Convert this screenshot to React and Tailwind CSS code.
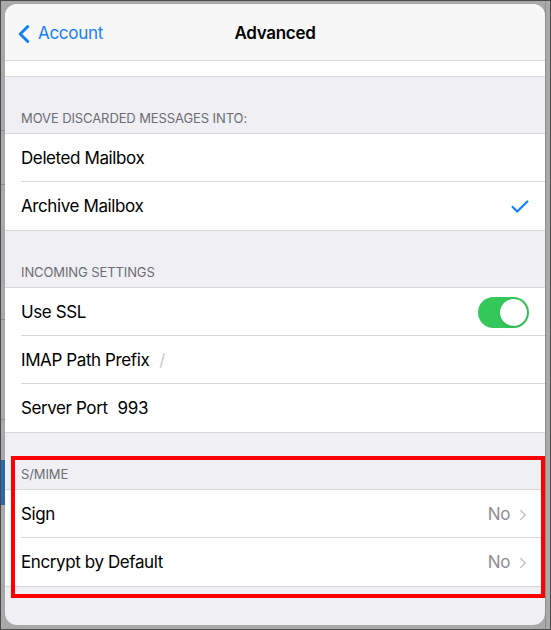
import { ChevronLeft, ChevronRight, Check } from 'lucide-react'

const font = { fontFamily: 'Inter, "Noto Sans", sans-serif' }

export default function App() {
  return (
    <div className="w-[551px] h-[630px] bg-[#a9a9a9] border border-[#4a4a4a] flex overflow-hidden" style={font}>
      {/* dimmed content behind the sheet */}
      <div className="w-[4px] flex flex-col shrink-0">
        <div className="h-[130px] border-b border-[#8c8c8c]" />
        <div className="h-[54px] border-b border-[#8c8c8c]" />
        <div className="h-[135px] border-b border-[#8c8c8c]" />
        <div className="h-[100px] border-b border-[#8c8c8c]" />
        <div className="h-[40px]" />
        <div className="h-[45px] bg-[#2c67b0]" />
      </div>

      <div className="relative mt-[3px] mb-[4px] w-[540px] shrink-0 rounded-[12px] overflow-hidden bg-[#efeff4] flex flex-col">
        {/* nav bar */}
        <div className="h-[57px] bg-[#f7f7f7] border-b border-[#d8d8dc] flex items-center relative shrink-0 pt-[3px]">
          <div className="flex items-center text-[#157efb] text-[17px] tracking-[-0.3px] pl-[4px]">
            <ChevronLeft size={30} strokeWidth={2.4} className="-mr-[1px]" />
            <span>Account</span>
          </div>
          <div className="absolute inset-0 pt-[3px] flex items-center justify-center pointer-events-none">
            <span className="text-[17px] font-semibold tracking-[-0.3px] text-black">Advanced</span>
          </div>
        </div>

        <div className="h-[16px] bg-white border-b border-[#d8d8dc] shrink-0" />

        <Header text="MOVE DISCARDED MESSAGES INTO:" />
        <div className="bg-white border-y border-[#d8d8dc]">
          <Row label="Deleted Mailbox" />
          <Row label="Archive Mailbox" last right={<Check size={22} strokeWidth={2.4} className="text-[#157efb] -mr-[2px]" />} />
        </div>

        <Header text="INCOMING SETTINGS" />
        <div className="bg-white border-y border-[#d8d8dc]">
          <Row label="Use SSL" right={
            <div className="w-[51px] h-[31px] rounded-full bg-[#34c759] flex items-center justify-end px-[2px]">
              <div className="w-[27px] h-[27px] rounded-full bg-white shadow" />
            </div>
          } />
          <Row label="IMAP Path Prefix" value="/" valueClass="text-[#c7c7cc]" />
          <Row label="Server Port" value="993" valueClass="text-black" last />
        </div>

        <Header text="S/MIME" />
        <div className="bg-white border-y border-[#d8d8dc]">
          <Row label="Sign" right={<Detail />} />
          <Row label="Encrypt by Default" right={<Detail />} last />
        </div>

        <div className="flex-1" />

        {/* annotation box */}
        <div className="absolute left-[6px] top-[452px] w-[534px] h-[142px] border-4 border-[#ff0000] pointer-events-none" />
      </div>

      <div className="flex-1 border-l border-[#8e8e8e]" />
    </div>
  )
}

function Header({ text }) {
  return (
    <div className="h-[56px] flex items-end pl-[16px] pb-[5px] text-[13px] tracking-[-0.1px] text-[#6d6d72] shrink-0">
      {text}
    </div>
  )
}

function Row({ label, value, valueClass, right, last }) {
  return (
    <div className="pl-[16px]">
      <div className={`h-[48px] flex items-center pr-[16px] pt-[2px] ${last ? '' : 'border-b border-[#d8d8dc]'}`}>
        <span className="text-[17px] tracking-[-0.4px] text-black">{label}</span>
        {value && <span className={`ml-[10px] text-[17px] tracking-[-0.4px] ${valueClass}`}>{value}</span>}
        <div className="flex-1" />
        {right}
      </div>
    </div>
  )
}

function Detail() {
  return (
    <div className="flex items-center text-[#8e8e93]">
      <span className="text-[17px] tracking-[-0.4px]">No</span>
      <ChevronRight size={18} strokeWidth={2} className="ml-[4px] -mr-[3px] text-[#c4c4c7]" />
    </div>
  )
}
